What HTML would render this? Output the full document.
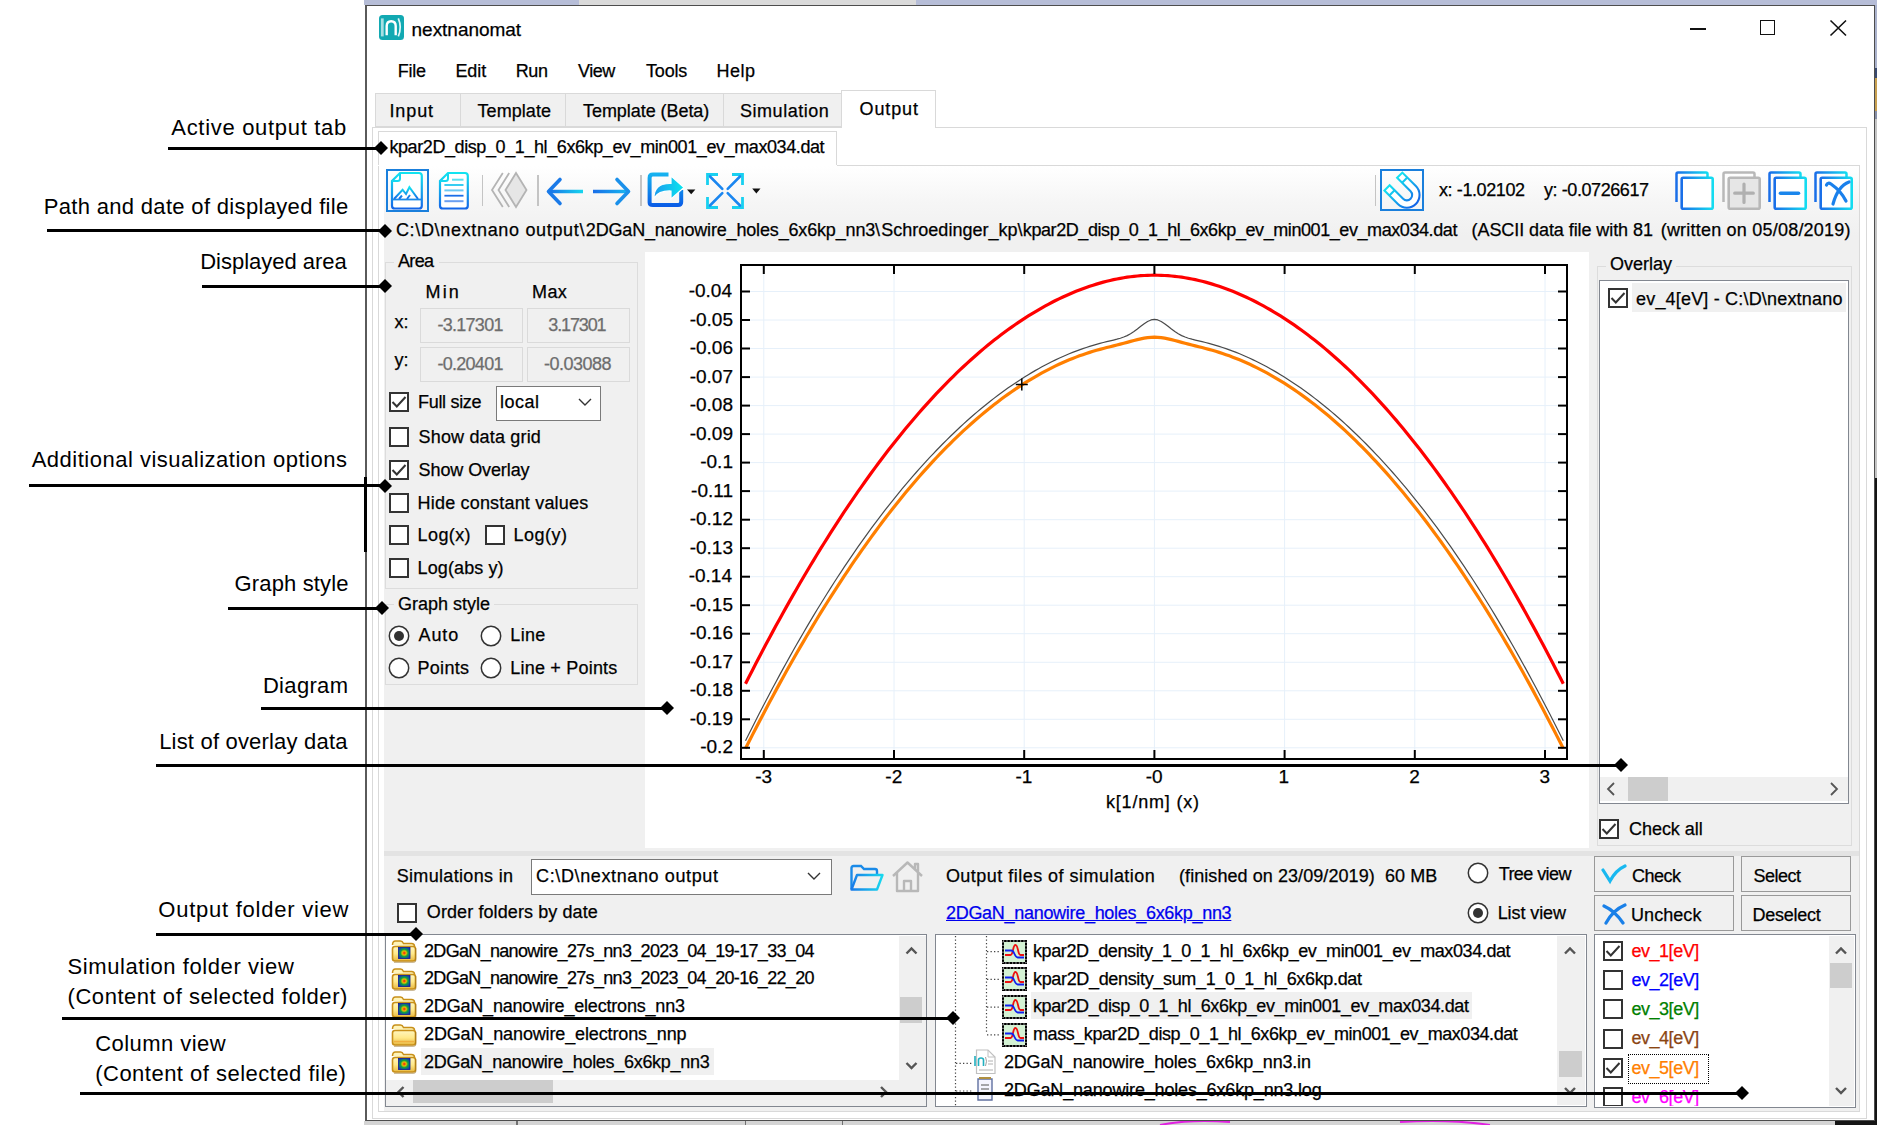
<!DOCTYPE html>
<html><head><meta charset="utf-8"><title>nextnanomat</title>
<style>
html,body{margin:0;padding:0}
body{width:1877px;height:1125px;overflow:hidden;position:relative;background:#fff;font-family:"Liberation Sans",sans-serif}
.t{position:absolute;white-space:pre;font-family:"Liberation Sans",sans-serif;-webkit-text-stroke:0.25px currentColor}
</style></head><body>
<div style="position:absolute;left:364px;top:0px;width:1513px;height:5px;background:#b6bdd7"></div>
<div style="position:absolute;left:579px;top:0px;width:337px;height:5px;background:#dadada"></div>
<div style="position:absolute;left:364px;top:1121px;width:1471px;height:4px;background:#d4d4d4"></div>
<div style="position:absolute;left:1835px;top:1110px;width:42px;height:15px;background:#151515"></div>
<div style="position:absolute;left:1874px;top:5px;width:3px;height:63px;background:#aab2cc"></div>
<div style="position:absolute;left:1874px;top:68px;width:3px;height:10px;background:#3a4a70"></div>
<div style="position:absolute;left:1874px;top:78px;width:3px;height:33px;background:#c8a050"></div>
<div style="position:absolute;left:1874px;top:111px;width:3px;height:8px;background:#8890a8"></div>
<div style="position:absolute;left:1874px;top:119px;width:3px;height:359px;background:#c4c4c4"></div>
<div style="position:absolute;left:1874px;top:478px;width:3px;height:647px;background:#151515"></div>
<div style="position:absolute;left:516px;top:1121px;width:1.5px;height:4px;background:#707070"></div>
<div style="position:absolute;left:744.5px;top:1121px;width:1.5px;height:4px;background:#707070"></div>
<div style="position:absolute;left:841.5px;top:1121px;width:1.5px;height:4px;background:#707070"></div>
<svg style="position:absolute;left:1150px;top:1119px" width="400" height="6" viewBox="0 0 400 6"><path d="M10 6 Q40 0 80 3 M250 3 Q300 0 340 6" fill="none" stroke="#e020e0" stroke-width="2"/></svg>
<div style="position:absolute;left:365px;top:5px;width:1510px;height:1116px;background:#fff;border:1px solid #4d4d4d;border-left:2px solid #5a5a5a;box-sizing:border-box"></div>
<svg style="position:absolute;left:379.3px;top:15.3px" width="25" height="25" viewBox="0 0 25 25">
<rect x="0" y="0" width="25" height="25" rx="3.5" fill="#12a9b2"/>
<rect x="1.9" y="3.4" width="2.8" height="18" fill="#a6dfe2"/>
<path d="M7.7 20.2 V11 Q7.7 6.2 12.2 6.2 Q16.7 6.2 16.7 11 V20.2" fill="none" stroke="#fff" stroke-width="2.4"/>
<path d="M19.3 3.4 Q23.2 12.4 19.3 21.4" fill="none" stroke="#e0f7f8" stroke-width="1.7"/>
</svg>
<div class="t" style="left:411.60px;top:19.92px;font-size:19px;line-height:19px;color:#000;letter-spacing:-0.037px;">nextnanomat</div>
<div style="position:absolute;left:1690px;top:28px;width:16px;height:1.5px;background:#111"></div>
<div style="position:absolute;left:1760px;top:20px;width:15px;height:15px;border:1.5px solid #111;box-sizing:border-box"></div>
<svg style="position:absolute;left:1829px;top:19px" width="19" height="18" viewBox="0 0 19 18"><path d="M1.5 1.5 L17 16.5 M17 1.5 L1.5 16.5" stroke="#111" stroke-width="1.6"/></svg>
<div class="t" style="left:397.80px;top:62.26px;font-size:18px;line-height:18px;color:#000;letter-spacing:-0.298px;">File</div>
<div class="t" style="left:455.40px;top:62.26px;font-size:18px;line-height:18px;color:#000;letter-spacing:-0.072px;">Edit</div>
<div class="t" style="left:515.70px;top:62.26px;font-size:18px;line-height:18px;color:#000;letter-spacing:-0.355px;">Run</div>
<div class="t" style="left:577.90px;top:62.26px;font-size:18px;line-height:18px;color:#000;letter-spacing:-0.430px;">View</div>
<div class="t" style="left:646.00px;top:62.26px;font-size:18px;line-height:18px;color:#000;letter-spacing:-0.180px;">Tools</div>
<div class="t" style="left:716.50px;top:62.26px;font-size:18px;line-height:18px;color:#000;letter-spacing:0.464px;">Help</div>
<div style="position:absolute;left:375px;top:93px;width:86px;height:34px;background:#f0f0f0;border:1px solid #d9d9d9;box-sizing:border-box"></div>
<div class="t" style="left:389.40px;top:102.36px;font-size:18px;line-height:18px;color:#000;letter-spacing:0.917px;">Input</div>
<div style="position:absolute;left:460px;top:93px;width:106px;height:34px;background:#f0f0f0;border:1px solid #d9d9d9;box-sizing:border-box"></div>
<div class="t" style="left:477.50px;top:102.36px;font-size:18px;line-height:18px;color:#000;letter-spacing:0.068px;">Template</div>
<div style="position:absolute;left:565px;top:93px;width:159px;height:34px;background:#f0f0f0;border:1px solid #d9d9d9;box-sizing:border-box"></div>
<div class="t" style="left:583.00px;top:102.36px;font-size:18px;line-height:18px;color:#000;letter-spacing:-0.054px;">Template (Beta)</div>
<div style="position:absolute;left:723px;top:93px;width:119px;height:34px;background:#f0f0f0;border:1px solid #d9d9d9;box-sizing:border-box"></div>
<div class="t" style="left:740.00px;top:102.36px;font-size:18px;line-height:18px;color:#000;letter-spacing:0.530px;">Simulation</div>
<div style="position:absolute;left:372px;top:127px;width:1495px;height:992px;border:1px solid #d9d9d9;box-sizing:border-box;background:#fff"></div>
<div style="position:absolute;left:841px;top:90px;width:95px;height:38px;background:#fff;border:1px solid #d9d9d9;border-bottom:none;box-sizing:border-box"></div>
<div class="t" style="left:859.50px;top:100.06px;font-size:18px;line-height:18px;color:#000;letter-spacing:0.893px;">Output</div>
<div style="position:absolute;left:378px;top:131px;width:459px;height:35px;background:#fff;border:1px solid #d9d9d9;border-bottom:none;box-sizing:border-box"></div>
<div class="t" style="left:389.40px;top:138.26px;font-size:18px;line-height:18px;color:#000;letter-spacing:-0.407px;">kpar2D_disp_0_1_hl_6x6kp_ev_min001_ev_max034.dat</div>
<div style="position:absolute;left:378px;top:165px;width:1482px;height:947px;border:1px solid #d9d9d9;box-sizing:border-box;background:#fff"></div>
<div style="position:absolute;left:378px;top:165px;width:459px;height:1px;background:#fff"></div>
<div style="position:absolute;left:384px;top:166px;width:1475px;height:86px;background:linear-gradient(#ffffff 0px,#f6f6f6 35px,#f0f0f0 70px,#f0f0f0 86px)"></div>
<div style="position:absolute;left:384px;top:252px;width:261px;height:598px;background:#f0f0f0"></div>
<div style="position:absolute;left:645px;top:252px;width:944px;height:596px;background:#fff"></div>
<div style="position:absolute;left:1589px;top:252px;width:270px;height:598px;background:#f0f0f0"></div>
<div style="position:absolute;left:384px;top:848px;width:1475px;height:3px;background:#f0f0f0"></div>
<div style="position:absolute;left:384px;top:851px;width:1475px;height:5px;background:#e3e3e3"></div>
<div style="position:absolute;left:384px;top:856px;width:1475px;height:255px;background:#f0f0f0"></div>
<div style="position:absolute;left:385.5px;top:168.8px;width:43.5px;height:43px;border:2px solid #1a7fdc;box-sizing:border-box"></div>
<svg style="position:absolute;left:0;top:0;overflow:visible" width="1" height="1">
<defs>
<linearGradient id="gv" gradientUnits="objectBoundingBox" x1="0" y1="0" x2="0" y2="1"><stop offset="0" stop-color="#12e4f0"/><stop offset="1" stop-color="#1466e8"/></linearGradient>
<linearGradient id="gh" gradientUnits="objectBoundingBox" x1="0" y1="0" x2="1" y2="0"><stop offset="0" stop-color="#1a6ee8"/><stop offset="1" stop-color="#14dcf0"/></linearGradient>
<linearGradient id="gd" gradientUnits="objectBoundingBox" x1="0" y1="1" x2="1" y2="0"><stop offset="0" stop-color="#1466e8"/><stop offset="1" stop-color="#14e0f0"/></linearGradient>
</defs></svg>
<svg style="position:absolute;left:390px;top:170px" width="34" height="40" viewBox="0 0 34 40">
<path d="M10 3 H29 Q31.8 3 31.8 5.8 V35.7 Q31.8 38.5 29 38.5 H4.8 Q2 38.5 2 35.7 V11 Z" fill="#fff" stroke="url(#gv)" stroke-width="2.2"/>
<path d="M10 3 V8.5 Q10 11 7.5 11 H2" fill="none" stroke="#14d8f0" stroke-width="2"/>
<path d="M4 29 L12.6 19.7 L16 24 L19.4 17.2 L28 29 M9 29 L12 25.5 M17 29 L20 25" fill="none" stroke="url(#gv)" stroke-width="2"/>
<path d="M2.5 29.5 H31.5" stroke="#1a8ae8" stroke-width="1.8"/>
</svg>
<svg style="position:absolute;left:438px;top:170px" width="32" height="40" viewBox="0 0 32 40">
<path d="M10 3 H27 Q29.8 3 29.8 5.8 V35.7 Q29.8 38.5 27 38.5 H4.8 Q2 38.5 2 35.7 V11 Z" fill="#fff" stroke="url(#gv)" stroke-width="2.2"/>
<path d="M10 3 V8.5 Q10 11 7.5 11 H2" fill="none" stroke="#14d8f0" stroke-width="2"/>
<path d="M14 9.7 H25.5" stroke="#5ce0f0" stroke-width="2"/>
<path d="M6.4 15 H25.5" stroke="#22c8f0" stroke-width="1.8"/>
<path d="M6.4 20.4 H25.5" stroke="#6cc8f4" stroke-width="2"/>
<path d="M6.4 25.7 H25.5" stroke="#1a6ee8" stroke-width="1.8"/>
<path d="M6.4 31.2 H25.5" stroke="#6a9ef0" stroke-width="2"/>
</svg>
<div style="position:absolute;left:481.5px;top:175px;width:1.5px;height:31px;background:#c4c4c4"></div>
<svg style="position:absolute;left:490px;top:171px" width="38" height="40" viewBox="0 0 38 40">
<path d="M12.8 2 L2 19 L12.8 36 M19.2 2 L8.5 19 L19.2 36" fill="none" stroke="#b4b4b4" stroke-width="1.8"/>
<path d="M26 2 L36.5 19 L26 36 L15.5 19 Z" fill="#e6e6e6" stroke="#b4b4b4" stroke-width="1.8"/>
<path d="M12.8 2 L19.2 2 M12.8 36 L19.2 36" stroke="#b4b4b4" stroke-width="0"/>
</svg>
<div style="position:absolute;left:537px;top:175px;width:1.5px;height:31px;background:#c4c4c4"></div>
<svg style="position:absolute;left:545px;top:176px" width="40" height="32" viewBox="0 0 40 32">
<defs><linearGradient id="ga" gradientUnits="userSpaceOnUse" x1="3" y1="0" x2="38" y2="0"><stop offset="0" stop-color="#1a6ee8"/><stop offset="1" stop-color="#16d6ee"/></linearGradient>
<linearGradient id="gb" gradientUnits="userSpaceOnUse" x1="2" y1="0" x2="37" y2="0"><stop offset="0" stop-color="#1a6ee8"/><stop offset="1" stop-color="#16b8f0"/></linearGradient></defs>
<path d="M4 15.5 H38" stroke="url(#ga)" stroke-width="3.4"/>
<path d="M15 3.5 L3.5 15.5 L15 27.5" fill="none" stroke="#1a7ae8" stroke-width="3.6" stroke-linecap="round" stroke-linejoin="round"/>
</svg>
<svg style="position:absolute;left:591px;top:176px" width="42" height="32" viewBox="0 0 42 32">
<path d="M2 15.5 H37" stroke="url(#gb)" stroke-width="3.4"/>
<path d="M26 3.5 L37.5 15.5 L26 27.5" fill="none" stroke="#1a90ea" stroke-width="3.6" stroke-linecap="round" stroke-linejoin="round"/>
</svg>
<div style="position:absolute;left:640px;top:175px;width:1.5px;height:31px;background:#c4c4c4"></div>
<svg style="position:absolute;left:646px;top:171px" width="54" height="38" viewBox="0 0 54 38">
<defs><linearGradient id="gex" gradientUnits="userSpaceOnUse" x1="0" y1="2" x2="0" y2="36"><stop offset="0" stop-color="#16b4f0"/><stop offset="1" stop-color="#0a5ae6"/></linearGradient>
<linearGradient id="garr" gradientUnits="userSpaceOnUse" x1="10" y1="0" x2="38" y2="0"><stop offset="0" stop-color="#1aa0ee"/><stop offset="1" stop-color="#0ae6ee"/></linearGradient></defs>
<path d="M22.5 3.6 H7 Q3.6 3.6 3.6 7 V31.5 Q3.6 34 7 34 H32 Q35.2 34 35.2 31 V19" fill="none" stroke="url(#gex)" stroke-width="4"/>
<path d="M8 27 Q8 12 25 12.5 V5 L38 16.5 L25 28 V20 Q13 19.5 8 27 Z" fill="url(#garr)" stroke="#fff" stroke-width="1.2"/>
<path d="M41 18.5 H49.4 L45.2 23.3 Z" fill="#111"/>
</svg>
<svg style="position:absolute;left:705px;top:171px" width="58" height="40" viewBox="0 0 58 40">
<path d="M2.5 14 V3.5 H13 M2.5 26 V36.5 H13 M37.5 14 V3.5 H27 M37.5 26 V36.5 H27" fill="none" stroke="#18d0f0" stroke-width="2.8"/>
<path d="M5 5.5 L17.3 17.8 M35 5.5 L22.7 17.8 M5 34.5 L17.3 22.2 M35 34.5 L22.7 22.2" fill="none" stroke="#1a86f0" stroke-width="2.6" stroke-linecap="round"/>
<path d="M47.2 17.5 H55.5 L51.35 22.4 Z" fill="#111"/>
</svg>
<div style="position:absolute;left:1374.5px;top:175px;width:1.5px;height:31px;background:#c4c4c4"></div>
<div style="position:absolute;left:1380.4px;top:168.8px;width:43.2px;height:42.7px;border:2px solid #1a7fdc;box-sizing:border-box"></div>
<svg style="position:absolute;left:1383px;top:171px" width="40" height="40" viewBox="0 0 40 40">
<defs><linearGradient id="gmag" gradientUnits="userSpaceOnUse" x1="0" y1="-15" x2="0" y2="15"><stop offset="0" stop-color="#14e0f0"/><stop offset="1" stop-color="#1466e8"/></linearGradient></defs>
<g transform="translate(21.6 21.8) rotate(-45) scale(1.04)">
<path d="M-12.2 -15.25 V3.05 A12.2 12.2 0 0 0 12.2 3.05 V-15.25 H5.1 V3.05 A5.1 5.1 0 0 1 -5.1 3.05 V-15.25 Z" fill="#fff" stroke="url(#gmag)" stroke-width="2"/>
<path d="M-12.2 -8.5 H-5.1 M5.1 -8.5 H12.2" stroke="#14c8f0" stroke-width="2"/>
</g></svg>
<div class="t" style="left:1439.00px;top:180.76px;font-size:18px;line-height:18px;color:#000;letter-spacing:-0.405px;">x: -1.02102</div>
<div class="t" style="left:1544.00px;top:180.76px;font-size:18px;line-height:18px;color:#000;letter-spacing:-0.423px;">y: -0.0726617</div>
<svg style="position:absolute;left:1674.9px;top:171px" width="40" height="40" viewBox="0 0 40 40">
<path d="M1.5 31 V3 Q1.5 1.5 3 1.5 H31 Q32.5 1.5 32.5 3 V6.5" fill="none" stroke="url(#gh)" stroke-width="2.5"/>
<rect x="6.7" y="6.7" width="31" height="31" rx="1.5" fill="#fff" stroke="url(#gh)" stroke-width="2.6"/>

</svg>
<svg style="position:absolute;left:1721.7px;top:171px" width="40" height="40" viewBox="0 0 40 40">
<path d="M1.5 31 V3 Q1.5 1.5 3 1.5 H31 Q32.5 1.5 32.5 3 V6.5" fill="none" stroke="#b8b8b8" stroke-width="2.5"/>
<rect x="6.7" y="6.7" width="31" height="31" rx="1.5" fill="#e6e6e6" stroke="#b8b8b8" stroke-width="2.6"/>
<path d="M22 13 V31.5 M12.7 22.2 H31.3" stroke="#b0b0b0" stroke-width="3.2" stroke-linecap="round"/>
</svg>
<svg style="position:absolute;left:1767.9px;top:171px" width="40" height="40" viewBox="0 0 40 40">
<path d="M1.5 31 V3 Q1.5 1.5 3 1.5 H31 Q32.5 1.5 32.5 3 V6.5" fill="none" stroke="url(#gh)" stroke-width="2.5"/>
<rect x="6.7" y="6.7" width="31" height="31" rx="1.5" fill="#fff" stroke="url(#gh)" stroke-width="2.6"/>
<path d="M12.5 22.3 H30.5" stroke="#1a86ec" stroke-width="3.6" stroke-linecap="round"/>
</svg>
<svg style="position:absolute;left:1814.1px;top:171px" width="40" height="40" viewBox="0 0 40 40">
<path d="M1.5 31 V3 Q1.5 1.5 3 1.5 H31 Q32.5 1.5 32.5 3 V6.5" fill="none" stroke="url(#gh)" stroke-width="2.5"/>
<rect x="6.7" y="6.7" width="31" height="31" rx="1.5" fill="#fff" stroke="url(#gh)" stroke-width="2.6"/>
<path d="M35 11 Q24 15 19 33 M12.5 14 Q14 11 17 13 Q27 20 32 30" fill="none" stroke="#1a80ec" stroke-width="3.2" stroke-linecap="round"/>
</svg>
<div class="t" style="left:395.90px;top:220.76px;font-size:18px;line-height:18px;color:#000;letter-spacing:0.674px;">C:\D\nextnano output\</div>
<div class="t" style="left:585.80px;top:220.76px;font-size:18px;line-height:18px;color:#000;letter-spacing:-0.164px;">2DGaN_nanowire_holes_6x6kp_nn3\</div>
<div class="t" style="left:881.30px;top:220.76px;font-size:18px;line-height:18px;color:#000;letter-spacing:0.007px;">Schroedinger_kp\</div>
<div class="t" style="left:1022.80px;top:220.76px;font-size:18px;line-height:18px;color:#000;letter-spacing:-0.420px;">kpar2D_disp_0_1_hl_6x6kp_ev_min001_ev_max034.dat</div>
<div class="t" style="left:1471.60px;top:220.76px;font-size:18px;line-height:18px;color:#000;letter-spacing:-0.077px;">(ASCII data file with 81</div>
<div class="t" style="left:1660.70px;top:220.76px;font-size:18px;line-height:18px;color:#000;letter-spacing:0.213px;">(written on 05/08/2019)</div>
<div style="position:absolute;left:385px;top:262px;width:253px;height:327px;border:1px solid #dcdcdc;box-sizing:border-box"></div>
<div style="position:absolute;left:394px;top:260px;width:45px;height:4px;background:#f0f0f0"></div>
<div class="t" style="left:398.00px;top:251.76px;font-size:18px;line-height:18px;color:#000;letter-spacing:-0.670px;">Area</div>
<div class="t" style="left:425.60px;top:282.76px;font-size:18px;line-height:18px;color:#000;letter-spacing:2.103px;">Min</div>
<div class="t" style="left:532.00px;top:282.76px;font-size:18px;line-height:18px;color:#000;letter-spacing:0.398px;">Max</div>
<div class="t" style="left:394.50px;top:312.56px;font-size:18px;line-height:18px;color:#000;">x:</div>
<div class="t" style="left:394.50px;top:350.56px;font-size:18px;line-height:18px;color:#000;">y:</div>
<div style="position:absolute;left:420px;top:308px;width:103px;height:35px;border:1px solid #dadada;box-sizing:border-box;background:#f0f0f0"></div>
<div class="t" style="left:437.60px;top:315.76px;font-size:18px;line-height:18px;color:#6d6d6d;letter-spacing:-0.750px;">-3.17301</div>
<div style="position:absolute;left:527px;top:308px;width:103px;height:35px;border:1px solid #dadada;box-sizing:border-box;background:#f0f0f0"></div>
<div class="t" style="left:548.25px;top:315.76px;font-size:18px;line-height:18px;color:#6d6d6d;letter-spacing:-1.126px;">3.17301</div>
<div style="position:absolute;left:420px;top:347px;width:103px;height:35px;border:1px solid #dadada;box-sizing:border-box;background:#f0f0f0"></div>
<div class="t" style="left:437.60px;top:354.76px;font-size:18px;line-height:18px;color:#6d6d6d;letter-spacing:-0.750px;">-0.20401</div>
<div style="position:absolute;left:527px;top:347px;width:103px;height:35px;border:1px solid #dadada;box-sizing:border-box;background:#f0f0f0"></div>
<div class="t" style="left:544.00px;top:354.76px;font-size:18px;line-height:18px;color:#6d6d6d;letter-spacing:-0.493px;">-0.03088</div>
<div style="position:absolute;left:389px;top:392px;width:20px;height:20px;border:2px solid #333;box-sizing:border-box;background:#fff"></div>
<svg style="position:absolute;left:389px;top:392px" width="20" height="20" viewBox="0 0 20 20"><path d="M3.5 10 L7.8 14.5 L16.5 5" fill="none" stroke="#333" stroke-width="2"/></svg>
<div class="t" style="left:418.00px;top:392.76px;font-size:18px;line-height:18px;color:#000;letter-spacing:-0.313px;">Full size</div>
<div style="position:absolute;left:496px;top:386px;width:105px;height:35px;border:1.5px solid #7a7a7a;box-sizing:border-box;background:#fff"></div>
<div class="t" style="left:499.90px;top:392.76px;font-size:18px;line-height:18px;color:#000;letter-spacing:0.495px;">local</div>
<svg style="position:absolute;left:577px;top:396px" width="16" height="12" viewBox="0 0 16 12"><path d="M2 3 L8 9 L14 3" fill="none" stroke="#333" stroke-width="1.4"/></svg>
<div style="position:absolute;left:389px;top:427px;width:20px;height:20px;border:2px solid #333;box-sizing:border-box;background:#fff"></div>
<div class="t" style="left:418.60px;top:428.26px;font-size:18px;line-height:18px;color:#000;letter-spacing:0.164px;">Show data grid</div>
<div style="position:absolute;left:389px;top:460px;width:20px;height:20px;border:2px solid #333;box-sizing:border-box;background:#fff"></div>
<svg style="position:absolute;left:389px;top:460px" width="20" height="20" viewBox="0 0 20 20"><path d="M3.5 10 L7.8 14.5 L16.5 5" fill="none" stroke="#333" stroke-width="2"/></svg>
<div class="t" style="left:418.60px;top:461.26px;font-size:18px;line-height:18px;color:#000;letter-spacing:-0.095px;">Show Overlay</div>
<div style="position:absolute;left:389px;top:493px;width:20px;height:20px;border:2px solid #333;box-sizing:border-box;background:#fff"></div>
<div class="t" style="left:417.60px;top:494.26px;font-size:18px;line-height:18px;color:#000;letter-spacing:0.184px;">Hide constant values</div>
<div style="position:absolute;left:389px;top:525px;width:20px;height:20px;border:2px solid #333;box-sizing:border-box;background:#fff"></div>
<div class="t" style="left:417.60px;top:526.26px;font-size:18px;line-height:18px;color:#000;letter-spacing:0.395px;">Log(x)</div>
<div style="position:absolute;left:389px;top:558px;width:20px;height:20px;border:2px solid #333;box-sizing:border-box;background:#fff"></div>
<div class="t" style="left:417.60px;top:559.26px;font-size:18px;line-height:18px;color:#000;letter-spacing:0.106px;">Log(abs y)</div>
<div style="position:absolute;left:485px;top:525px;width:20px;height:20px;border:2px solid #333;box-sizing:border-box;background:#fff"></div>
<div class="t" style="left:513.40px;top:526.26px;font-size:18px;line-height:18px;color:#000;letter-spacing:0.515px;">Log(y)</div>
<div style="position:absolute;left:385px;top:604px;width:253px;height:81px;border:1px solid #dcdcdc;box-sizing:border-box"></div>
<div style="position:absolute;left:394px;top:602px;width:100px;height:4px;background:#f0f0f0"></div>
<div class="t" style="left:398.00px;top:594.76px;font-size:18px;line-height:18px;color:#000;letter-spacing:-0.003px;">Graph style</div>
<svg style="position:absolute;left:387.6px;top:624.5px" width="22" height="22" viewBox="0 0 22 22"><circle cx="11" cy="11" r="9.7" fill="#fff" stroke="#333" stroke-width="1.5"/><circle cx="11" cy="11" r="5" fill="#333"/></svg>
<div class="t" style="left:418.50px;top:626.46px;font-size:18px;line-height:18px;color:#000;letter-spacing:0.927px;">Auto</div>
<svg style="position:absolute;left:480.4px;top:624.5px" width="22" height="22" viewBox="0 0 22 22"><circle cx="11" cy="11" r="9.7" fill="#fff" stroke="#333" stroke-width="1.5"/></svg>
<div class="t" style="left:510.30px;top:626.46px;font-size:18px;line-height:18px;color:#000;letter-spacing:0.326px;">Line</div>
<svg style="position:absolute;left:387.6px;top:656.8px" width="22" height="22" viewBox="0 0 22 22"><circle cx="11" cy="11" r="9.7" fill="#fff" stroke="#333" stroke-width="1.5"/></svg>
<div class="t" style="left:417.50px;top:659.06px;font-size:18px;line-height:18px;color:#000;letter-spacing:0.295px;">Points</div>
<svg style="position:absolute;left:480.4px;top:656.8px" width="22" height="22" viewBox="0 0 22 22"><circle cx="11" cy="11" r="9.7" fill="#fff" stroke="#333" stroke-width="1.5"/></svg>
<div class="t" style="left:510.30px;top:659.06px;font-size:18px;line-height:18px;color:#000;letter-spacing:0.202px;">Line + Points</div>
<svg style="position:absolute;left:0;top:0" width="1877" height="1125">
<line x1="763.8" y1="265" x2="763.8" y2="759" stroke="#e6f0fa" stroke-width="1"/>
<line x1="894.0" y1="265" x2="894.0" y2="759" stroke="#e6f0fa" stroke-width="1"/>
<line x1="1024.2" y1="265" x2="1024.2" y2="759" stroke="#e6f0fa" stroke-width="1"/>
<line x1="1154.4" y1="265" x2="1154.4" y2="759" stroke="#e6f0fa" stroke-width="1"/>
<line x1="1284.6" y1="265" x2="1284.6" y2="759" stroke="#e6f0fa" stroke-width="1"/>
<line x1="1414.8" y1="265" x2="1414.8" y2="759" stroke="#e6f0fa" stroke-width="1"/>
<line x1="1545.0" y1="265" x2="1545.0" y2="759" stroke="#e6f0fa" stroke-width="1"/>
<line x1="741" y1="291.5" x2="1567" y2="291.5" stroke="#e6f0fa" stroke-width="1"/>
<line x1="741" y1="320.0" x2="1567" y2="320.0" stroke="#e6f0fa" stroke-width="1"/>
<line x1="741" y1="348.5" x2="1567" y2="348.5" stroke="#e6f0fa" stroke-width="1"/>
<line x1="741" y1="377.1" x2="1567" y2="377.1" stroke="#e6f0fa" stroke-width="1"/>
<line x1="741" y1="405.6" x2="1567" y2="405.6" stroke="#e6f0fa" stroke-width="1"/>
<line x1="741" y1="434.1" x2="1567" y2="434.1" stroke="#e6f0fa" stroke-width="1"/>
<line x1="741" y1="462.6" x2="1567" y2="462.6" stroke="#e6f0fa" stroke-width="1"/>
<line x1="741" y1="491.1" x2="1567" y2="491.1" stroke="#e6f0fa" stroke-width="1"/>
<line x1="741" y1="519.7" x2="1567" y2="519.7" stroke="#e6f0fa" stroke-width="1"/>
<line x1="741" y1="548.2" x2="1567" y2="548.2" stroke="#e6f0fa" stroke-width="1"/>
<line x1="741" y1="576.7" x2="1567" y2="576.7" stroke="#e6f0fa" stroke-width="1"/>
<line x1="741" y1="605.2" x2="1567" y2="605.2" stroke="#e6f0fa" stroke-width="1"/>
<line x1="741" y1="633.7" x2="1567" y2="633.7" stroke="#e6f0fa" stroke-width="1"/>
<line x1="741" y1="662.3" x2="1567" y2="662.3" stroke="#e6f0fa" stroke-width="1"/>
<line x1="741" y1="690.8" x2="1567" y2="690.8" stroke="#e6f0fa" stroke-width="1"/>
<line x1="741" y1="719.3" x2="1567" y2="719.3" stroke="#e6f0fa" stroke-width="1"/>
<line x1="741" y1="747.8" x2="1567" y2="747.8" stroke="#e6f0fa" stroke-width="1"/>
<polyline points="745.51,740.74 748.91,733.92 752.32,727.16 755.73,720.45 759.14,713.80 762.54,707.21 765.95,700.68 769.36,694.20 772.77,687.79 776.17,681.43 779.58,675.13 782.99,668.89 786.40,662.71 789.80,656.59 793.21,650.53 796.62,644.53 800.03,638.59 803.43,632.71 806.84,626.89 810.25,621.13 813.66,615.43 817.06,609.80 820.47,604.22 823.88,598.71 827.29,593.26 830.69,587.87 834.10,582.54 837.51,577.28 840.92,572.07 844.32,566.93 847.73,561.85 851.14,556.82 854.55,551.86 857.95,546.96 861.36,542.12 864.77,537.35 868.17,532.63 871.58,527.97 874.99,523.37 878.40,518.83 881.80,514.35 885.21,509.93 888.62,505.57 892.03,501.26 895.43,497.02 898.84,492.83 902.25,488.70 905.66,484.62 909.06,480.61 912.47,476.64 915.88,472.74 919.29,468.89 922.69,465.10 926.10,461.36 929.51,457.68 932.92,454.06 936.32,450.49 939.73,446.97 943.14,443.51 946.55,440.11 949.95,436.75 953.36,433.46 956.77,430.21 960.18,427.03 963.58,423.89 966.99,420.81 970.40,417.79 973.81,414.82 977.21,411.90 980.62,409.03 984.03,406.23 987.44,403.47 990.84,400.77 994.25,398.12 997.66,395.53 1001.07,393.00 1004.47,390.51 1007.88,388.08 1011.29,385.71 1014.69,383.39 1018.10,381.13 1021.51,378.92 1024.92,376.76 1028.32,374.67 1031.73,372.62 1035.14,370.63 1038.55,368.70 1041.95,366.82 1045.36,365.00 1048.77,363.23 1052.18,361.52 1055.58,359.86 1058.99,358.26 1062.40,356.71 1065.81,355.23 1069.21,353.79 1072.62,352.41 1076.03,351.09 1079.44,349.83 1082.84,348.62 1086.25,347.46 1089.66,346.37 1093.07,345.32 1096.47,344.34 1099.88,343.40 1103.29,342.52 1106.70,341.68 1110.10,340.86 1113.51,340.05 1116.92,339.18 1120.33,338.22 1123.73,337.05 1127.14,335.61 1130.55,333.80 1133.96,331.60 1137.36,329.05 1140.77,326.33 1144.18,323.68 1147.59,321.44 1150.99,319.93 1154.40,319.40 1157.81,319.93 1161.21,321.44 1164.62,323.68 1168.03,326.33 1171.44,329.05 1174.84,331.60 1178.25,333.80 1181.66,335.61 1185.07,337.05 1188.47,338.22 1191.88,339.18 1195.29,340.05 1198.70,340.86 1202.10,341.68 1205.51,342.52 1208.92,343.40 1212.33,344.34 1215.73,345.32 1219.14,346.37 1222.55,347.46 1225.96,348.62 1229.36,349.83 1232.77,351.09 1236.18,352.41 1239.59,353.79 1242.99,355.23 1246.40,356.71 1249.81,358.26 1253.22,359.86 1256.62,361.52 1260.03,363.23 1263.44,365.00 1266.85,366.82 1270.25,368.70 1273.66,370.63 1277.07,372.62 1280.48,374.67 1283.88,376.76 1287.29,378.92 1290.70,381.13 1294.11,383.39 1297.51,385.71 1300.92,388.08 1304.33,390.51 1307.73,393.00 1311.14,395.53 1314.55,398.12 1317.96,400.77 1321.36,403.47 1324.77,406.23 1328.18,409.03 1331.59,411.90 1334.99,414.82 1338.40,417.79 1341.81,420.81 1345.22,423.89 1348.62,427.03 1352.03,430.21 1355.44,433.46 1358.85,436.75 1362.25,440.11 1365.66,443.51 1369.07,446.97 1372.48,450.49 1375.88,454.06 1379.29,457.68 1382.70,461.36 1386.11,465.10 1389.51,468.89 1392.92,472.74 1396.33,476.64 1399.74,480.61 1403.14,484.62 1406.55,488.70 1409.96,492.83 1413.37,497.02 1416.77,501.26 1420.18,505.57 1423.59,509.93 1427.00,514.35 1430.40,518.83 1433.81,523.37 1437.22,527.97 1440.63,532.63 1444.03,537.35 1447.44,542.12 1450.85,546.96 1454.25,551.86 1457.66,556.82 1461.07,561.85 1464.48,566.93 1467.88,572.07 1471.29,577.28 1474.70,582.54 1478.11,587.87 1481.51,593.26 1484.92,598.71 1488.33,604.22 1491.74,609.80 1495.14,615.43 1498.55,621.13 1501.96,626.89 1505.37,632.71 1508.77,638.59 1512.18,644.53 1515.59,650.53 1519.00,656.59 1522.40,662.71 1525.81,668.89 1529.22,675.13 1532.63,681.43 1536.03,687.79 1539.44,694.20 1542.85,700.68 1546.26,707.21 1549.66,713.80 1553.07,720.45 1556.48,727.16 1559.89,733.92 1563.29,740.74" fill="none" stroke="#4a4a4a" stroke-width="1.2" stroke-linejoin="round"/>
<polyline points="745.51,748.54 748.91,741.80 752.32,735.11 755.73,728.48 759.14,721.91 762.54,715.39 765.95,708.93 769.36,702.52 772.77,696.17 776.17,689.88 779.58,683.64 782.99,677.46 786.40,671.34 789.80,665.27 793.21,659.26 796.62,653.31 800.03,647.41 803.43,641.57 806.84,635.78 810.25,630.06 813.66,624.38 817.06,618.77 820.47,613.21 823.88,607.71 827.29,602.26 830.69,596.87 834.10,591.54 837.51,586.26 840.92,581.04 844.32,575.88 847.73,570.77 851.14,565.72 854.55,560.72 857.95,555.79 861.36,550.90 864.77,546.08 868.17,541.31 871.58,536.60 874.99,531.94 878.40,527.34 881.80,522.80 885.21,518.31 888.62,513.88 892.03,509.51 895.43,505.19 898.84,500.93 902.25,496.72 905.66,492.58 909.06,488.48 912.47,484.45 915.88,480.47 919.29,476.55 922.69,472.68 926.10,468.87 929.51,465.12 932.92,461.42 936.32,457.78 939.73,454.20 943.14,450.67 946.55,447.20 949.95,443.79 953.36,440.43 956.77,437.13 960.18,433.88 963.58,430.69 966.99,427.56 970.40,424.48 973.81,421.47 977.21,418.50 980.62,415.60 984.03,412.75 987.44,409.95 990.84,407.22 994.25,404.53 997.66,401.91 1001.07,399.34 1004.47,396.83 1007.88,394.38 1011.29,391.98 1014.69,389.64 1018.10,387.35 1021.51,385.12 1024.92,382.95 1028.32,380.83 1031.73,378.77 1035.14,376.77 1038.55,374.82 1041.95,372.93 1045.36,371.10 1048.77,369.32 1052.18,367.60 1055.58,365.93 1058.99,364.32 1062.40,362.77 1065.81,361.28 1069.21,359.84 1072.62,358.45 1076.03,357.13 1079.44,355.86 1082.84,354.64 1086.25,353.48 1089.66,352.38 1093.07,351.32 1096.47,350.32 1099.88,349.36 1103.29,348.44 1106.70,347.56 1110.10,346.69 1113.51,345.84 1116.92,344.98 1120.33,344.12 1123.73,343.24 1127.14,342.33 1130.55,341.42 1133.96,340.52 1137.36,339.65 1140.77,338.85 1144.18,338.17 1147.59,337.64 1150.99,337.31 1154.40,337.20 1157.81,337.31 1161.21,337.64 1164.62,338.17 1168.03,338.85 1171.44,339.65 1174.84,340.52 1178.25,341.42 1181.66,342.33 1185.07,343.24 1188.47,344.12 1191.88,344.98 1195.29,345.84 1198.70,346.69 1202.10,347.56 1205.51,348.44 1208.92,349.36 1212.33,350.32 1215.73,351.32 1219.14,352.38 1222.55,353.48 1225.96,354.64 1229.36,355.86 1232.77,357.13 1236.18,358.45 1239.59,359.84 1242.99,361.28 1246.40,362.77 1249.81,364.32 1253.22,365.93 1256.62,367.60 1260.03,369.32 1263.44,371.10 1266.85,372.93 1270.25,374.82 1273.66,376.77 1277.07,378.77 1280.48,380.83 1283.88,382.95 1287.29,385.12 1290.70,387.35 1294.11,389.64 1297.51,391.98 1300.92,394.38 1304.33,396.83 1307.73,399.34 1311.14,401.91 1314.55,404.53 1317.96,407.22 1321.36,409.95 1324.77,412.75 1328.18,415.60 1331.59,418.50 1334.99,421.47 1338.40,424.48 1341.81,427.56 1345.22,430.69 1348.62,433.88 1352.03,437.13 1355.44,440.43 1358.85,443.79 1362.25,447.20 1365.66,450.67 1369.07,454.20 1372.48,457.78 1375.88,461.42 1379.29,465.12 1382.70,468.87 1386.11,472.68 1389.51,476.55 1392.92,480.47 1396.33,484.45 1399.74,488.48 1403.14,492.58 1406.55,496.72 1409.96,500.93 1413.37,505.19 1416.77,509.51 1420.18,513.88 1423.59,518.31 1427.00,522.80 1430.40,527.34 1433.81,531.94 1437.22,536.60 1440.63,541.31 1444.03,546.08 1447.44,550.90 1450.85,555.79 1454.25,560.72 1457.66,565.72 1461.07,570.77 1464.48,575.88 1467.88,581.04 1471.29,586.26 1474.70,591.54 1478.11,596.87 1481.51,602.26 1484.92,607.71 1488.33,613.21 1491.74,618.77 1495.14,624.38 1498.55,630.06 1501.96,635.78 1505.37,641.57 1508.77,647.41 1512.18,653.31 1515.59,659.26 1519.00,665.27 1522.40,671.34 1525.81,677.46 1529.22,683.64 1532.63,689.88 1536.03,696.17 1539.44,702.52 1542.85,708.93 1546.26,715.39 1549.66,721.91 1553.07,728.48 1556.48,735.11 1559.89,741.80 1563.29,748.54" fill="none" stroke="#ff7f00" stroke-width="3.2" stroke-linejoin="round"/>
<polyline points="745.51,683.80 748.91,677.08 752.32,670.42 755.73,663.81 759.14,657.27 762.54,650.77 765.95,644.34 769.36,637.96 772.77,631.63 776.17,625.36 779.58,619.15 782.99,612.99 786.40,606.89 789.80,600.85 793.21,594.86 796.62,588.93 800.03,583.05 803.43,577.23 806.84,571.46 810.25,565.75 813.66,560.10 817.06,554.50 820.47,548.96 823.88,543.47 827.29,538.04 830.69,532.67 834.10,527.35 837.51,522.09 840.92,516.88 844.32,511.73 847.73,506.64 851.14,501.60 854.55,496.61 857.95,491.69 861.36,486.81 864.77,482.00 868.17,477.24 871.58,472.53 874.99,467.88 878.40,463.29 881.80,458.75 885.21,454.27 888.62,449.84 892.03,445.47 895.43,441.16 898.84,436.90 902.25,432.69 905.66,428.55 909.06,424.45 912.47,420.41 915.88,416.43 919.29,412.51 922.69,408.63 926.10,404.82 929.51,401.06 932.92,397.35 936.32,393.70 939.73,390.11 943.14,386.57 946.55,383.08 949.95,379.65 953.36,376.28 956.77,372.96 960.18,369.70 963.58,366.49 966.99,363.34 970.40,360.24 973.81,357.19 977.21,354.20 980.62,351.27 984.03,348.39 987.44,345.57 990.84,342.80 994.25,340.08 997.66,337.42 1001.07,334.82 1004.47,332.27 1007.88,329.77 1011.29,327.33 1014.69,324.94 1018.10,322.61 1021.51,320.33 1024.92,318.11 1028.32,315.94 1031.73,313.82 1035.14,311.76 1038.55,309.76 1041.95,307.81 1045.36,305.91 1048.77,304.07 1052.18,302.28 1055.58,300.55 1058.99,298.87 1062.40,297.25 1065.81,295.68 1069.21,294.17 1072.62,292.72 1076.03,291.32 1079.44,289.97 1082.84,288.69 1086.25,287.45 1089.66,286.28 1093.07,285.16 1096.47,284.10 1099.88,283.10 1103.29,282.15 1106.70,281.27 1110.10,280.44 1113.51,279.67 1116.92,278.96 1120.33,278.31 1123.73,277.72 1127.14,277.20 1130.55,276.73 1133.96,276.33 1137.36,275.98 1140.77,275.70 1144.18,275.48 1147.59,275.33 1150.99,275.23 1154.40,275.20 1157.81,275.23 1161.21,275.33 1164.62,275.48 1168.03,275.70 1171.44,275.98 1174.84,276.33 1178.25,276.73 1181.66,277.20 1185.07,277.72 1188.47,278.31 1191.88,278.96 1195.29,279.67 1198.70,280.44 1202.10,281.27 1205.51,282.15 1208.92,283.10 1212.33,284.10 1215.73,285.16 1219.14,286.28 1222.55,287.45 1225.96,288.69 1229.36,289.97 1232.77,291.32 1236.18,292.72 1239.59,294.17 1242.99,295.68 1246.40,297.25 1249.81,298.87 1253.22,300.55 1256.62,302.28 1260.03,304.07 1263.44,305.91 1266.85,307.81 1270.25,309.76 1273.66,311.76 1277.07,313.82 1280.48,315.94 1283.88,318.11 1287.29,320.33 1290.70,322.61 1294.11,324.94 1297.51,327.33 1300.92,329.77 1304.33,332.27 1307.73,334.82 1311.14,337.42 1314.55,340.08 1317.96,342.80 1321.36,345.57 1324.77,348.39 1328.18,351.27 1331.59,354.20 1334.99,357.19 1338.40,360.24 1341.81,363.34 1345.22,366.49 1348.62,369.70 1352.03,372.96 1355.44,376.28 1358.85,379.65 1362.25,383.08 1365.66,386.57 1369.07,390.11 1372.48,393.70 1375.88,397.35 1379.29,401.06 1382.70,404.82 1386.11,408.63 1389.51,412.51 1392.92,416.43 1396.33,420.41 1399.74,424.45 1403.14,428.55 1406.55,432.69 1409.96,436.90 1413.37,441.16 1416.77,445.47 1420.18,449.84 1423.59,454.27 1427.00,458.75 1430.40,463.29 1433.81,467.88 1437.22,472.53 1440.63,477.24 1444.03,482.00 1447.44,486.81 1450.85,491.69 1454.25,496.61 1457.66,501.60 1461.07,506.64 1464.48,511.73 1467.88,516.88 1471.29,522.09 1474.70,527.35 1478.11,532.67 1481.51,538.04 1484.92,543.47 1488.33,548.96 1491.74,554.50 1495.14,560.10 1498.55,565.75 1501.96,571.46 1505.37,577.23 1508.77,583.05 1512.18,588.93 1515.59,594.86 1519.00,600.85 1522.40,606.89 1525.81,612.99 1529.22,619.15 1532.63,625.36 1536.03,631.63 1539.44,637.96 1542.85,644.34 1546.26,650.77 1549.66,657.27 1553.07,663.81 1556.48,670.42 1559.89,677.08 1563.29,683.80" fill="none" stroke="#ff0000" stroke-width="3.2" stroke-linejoin="round"/>
<rect x="741" y="265" width="826" height="494" fill="none" stroke="#000" stroke-width="2"/>
<line x1="763.8" y1="265" x2="763.8" y2="274" stroke="#000" stroke-width="2"/>
<line x1="763.8" y1="750" x2="763.8" y2="759" stroke="#000" stroke-width="2"/>
<line x1="894.0" y1="265" x2="894.0" y2="274" stroke="#000" stroke-width="2"/>
<line x1="894.0" y1="750" x2="894.0" y2="759" stroke="#000" stroke-width="2"/>
<line x1="1024.2" y1="265" x2="1024.2" y2="274" stroke="#000" stroke-width="2"/>
<line x1="1024.2" y1="750" x2="1024.2" y2="759" stroke="#000" stroke-width="2"/>
<line x1="1154.4" y1="265" x2="1154.4" y2="274" stroke="#000" stroke-width="2"/>
<line x1="1154.4" y1="750" x2="1154.4" y2="759" stroke="#000" stroke-width="2"/>
<line x1="1284.6" y1="265" x2="1284.6" y2="274" stroke="#000" stroke-width="2"/>
<line x1="1284.6" y1="750" x2="1284.6" y2="759" stroke="#000" stroke-width="2"/>
<line x1="1414.8" y1="265" x2="1414.8" y2="274" stroke="#000" stroke-width="2"/>
<line x1="1414.8" y1="750" x2="1414.8" y2="759" stroke="#000" stroke-width="2"/>
<line x1="1545.0" y1="265" x2="1545.0" y2="274" stroke="#000" stroke-width="2"/>
<line x1="1545.0" y1="750" x2="1545.0" y2="759" stroke="#000" stroke-width="2"/>
<line x1="741" y1="291.5" x2="750" y2="291.5" stroke="#000" stroke-width="2"/>
<line x1="1558" y1="291.5" x2="1567" y2="291.5" stroke="#000" stroke-width="2"/>
<line x1="741" y1="320.0" x2="750" y2="320.0" stroke="#000" stroke-width="2"/>
<line x1="1558" y1="320.0" x2="1567" y2="320.0" stroke="#000" stroke-width="2"/>
<line x1="741" y1="348.5" x2="750" y2="348.5" stroke="#000" stroke-width="2"/>
<line x1="1558" y1="348.5" x2="1567" y2="348.5" stroke="#000" stroke-width="2"/>
<line x1="741" y1="377.1" x2="750" y2="377.1" stroke="#000" stroke-width="2"/>
<line x1="1558" y1="377.1" x2="1567" y2="377.1" stroke="#000" stroke-width="2"/>
<line x1="741" y1="405.6" x2="750" y2="405.6" stroke="#000" stroke-width="2"/>
<line x1="1558" y1="405.6" x2="1567" y2="405.6" stroke="#000" stroke-width="2"/>
<line x1="741" y1="434.1" x2="750" y2="434.1" stroke="#000" stroke-width="2"/>
<line x1="1558" y1="434.1" x2="1567" y2="434.1" stroke="#000" stroke-width="2"/>
<line x1="741" y1="462.6" x2="750" y2="462.6" stroke="#000" stroke-width="2"/>
<line x1="1558" y1="462.6" x2="1567" y2="462.6" stroke="#000" stroke-width="2"/>
<line x1="741" y1="491.1" x2="750" y2="491.1" stroke="#000" stroke-width="2"/>
<line x1="1558" y1="491.1" x2="1567" y2="491.1" stroke="#000" stroke-width="2"/>
<line x1="741" y1="519.7" x2="750" y2="519.7" stroke="#000" stroke-width="2"/>
<line x1="1558" y1="519.7" x2="1567" y2="519.7" stroke="#000" stroke-width="2"/>
<line x1="741" y1="548.2" x2="750" y2="548.2" stroke="#000" stroke-width="2"/>
<line x1="1558" y1="548.2" x2="1567" y2="548.2" stroke="#000" stroke-width="2"/>
<line x1="741" y1="576.7" x2="750" y2="576.7" stroke="#000" stroke-width="2"/>
<line x1="1558" y1="576.7" x2="1567" y2="576.7" stroke="#000" stroke-width="2"/>
<line x1="741" y1="605.2" x2="750" y2="605.2" stroke="#000" stroke-width="2"/>
<line x1="1558" y1="605.2" x2="1567" y2="605.2" stroke="#000" stroke-width="2"/>
<line x1="741" y1="633.7" x2="750" y2="633.7" stroke="#000" stroke-width="2"/>
<line x1="1558" y1="633.7" x2="1567" y2="633.7" stroke="#000" stroke-width="2"/>
<line x1="741" y1="662.3" x2="750" y2="662.3" stroke="#000" stroke-width="2"/>
<line x1="1558" y1="662.3" x2="1567" y2="662.3" stroke="#000" stroke-width="2"/>
<line x1="741" y1="690.8" x2="750" y2="690.8" stroke="#000" stroke-width="2"/>
<line x1="1558" y1="690.8" x2="1567" y2="690.8" stroke="#000" stroke-width="2"/>
<line x1="741" y1="719.3" x2="750" y2="719.3" stroke="#000" stroke-width="2"/>
<line x1="1558" y1="719.3" x2="1567" y2="719.3" stroke="#000" stroke-width="2"/>
<line x1="741" y1="747.8" x2="750" y2="747.8" stroke="#000" stroke-width="2"/>
<line x1="1558" y1="747.8" x2="1567" y2="747.8" stroke="#000" stroke-width="2"/>
<path d="M1021.8 378.5 V390.5 M1015.8 384.5 H1027.8" stroke="#000" stroke-width="1.5"/>
</svg>
<div class="t" style="left:688.66px;top:281.02px;font-size:19px;line-height:19px;color:#000;">-0.04</div>
<div class="t" style="left:689.66px;top:309.54px;font-size:19px;line-height:19px;color:#000;">-0.05</div>
<div class="t" style="left:689.66px;top:338.06px;font-size:19px;line-height:19px;color:#000;">-0.06</div>
<div class="t" style="left:689.66px;top:366.58px;font-size:19px;line-height:19px;color:#000;">-0.07</div>
<div class="t" style="left:689.66px;top:395.10px;font-size:19px;line-height:19px;color:#000;">-0.08</div>
<div class="t" style="left:689.66px;top:423.62px;font-size:19px;line-height:19px;color:#000;">-0.09</div>
<div class="t" style="left:700.23px;top:452.14px;font-size:19px;line-height:19px;color:#000;">-0.1</div>
<div class="t" style="left:691.07px;top:480.66px;font-size:19px;line-height:19px;color:#000;">-0.11</div>
<div class="t" style="left:689.66px;top:509.18px;font-size:19px;line-height:19px;color:#000;">-0.12</div>
<div class="t" style="left:689.66px;top:537.70px;font-size:19px;line-height:19px;color:#000;">-0.13</div>
<div class="t" style="left:688.66px;top:566.22px;font-size:19px;line-height:19px;color:#000;">-0.14</div>
<div class="t" style="left:689.66px;top:594.74px;font-size:19px;line-height:19px;color:#000;">-0.15</div>
<div class="t" style="left:689.66px;top:623.26px;font-size:19px;line-height:19px;color:#000;">-0.16</div>
<div class="t" style="left:689.66px;top:651.78px;font-size:19px;line-height:19px;color:#000;">-0.17</div>
<div class="t" style="left:689.66px;top:680.30px;font-size:19px;line-height:19px;color:#000;">-0.18</div>
<div class="t" style="left:689.66px;top:708.82px;font-size:19px;line-height:19px;color:#000;">-0.19</div>
<div class="t" style="left:700.23px;top:737.34px;font-size:19px;line-height:19px;color:#000;">-0.2</div>
<div class="t" style="left:755.14px;top:766.72px;font-size:19px;line-height:19px;color:#000;">-3</div>
<div class="t" style="left:885.34px;top:766.72px;font-size:19px;line-height:19px;color:#000;">-2</div>
<div class="t" style="left:1015.54px;top:766.72px;font-size:19px;line-height:19px;color:#000;">-1</div>
<div class="t" style="left:1145.74px;top:766.72px;font-size:19px;line-height:19px;color:#000;">-0</div>
<div class="t" style="left:1278.60px;top:766.72px;font-size:19px;line-height:19px;color:#000;">1</div>
<div class="t" style="left:1409.30px;top:766.72px;font-size:19px;line-height:19px;color:#000;">2</div>
<div class="t" style="left:1539.50px;top:766.72px;font-size:19px;line-height:19px;color:#000;">3</div>
<div class="t" style="left:1106.00px;top:792.76px;font-size:18px;line-height:18px;color:#000;letter-spacing:0.799px;">k[1/nm] (x)</div>
<div style="position:absolute;left:1597px;top:266px;width:255px;height:580px;border:1px solid #dcdcdc;box-sizing:border-box"></div>
<div style="position:absolute;left:1606px;top:264px;width:70px;height:4px;background:#f0f0f0"></div>
<div class="t" style="left:1610.00px;top:254.76px;font-size:18px;line-height:18px;color:#000;letter-spacing:-0.003px;">Overlay</div>
<div style="position:absolute;left:1599px;top:280px;width:250px;height:524px;border:1px solid #828790;box-sizing:border-box;background:#fff"></div>
<div style="position:absolute;left:1632px;top:283px;width:214px;height:29px;background:#f0f0f0"></div>
<div style="position:absolute;left:1608px;top:288px;width:20px;height:20px;border:2px solid #333;box-sizing:border-box;background:#fff"></div>
<svg style="position:absolute;left:1608px;top:288px" width="20" height="20" viewBox="0 0 20 20"><path d="M3.5 10 L7.8 14.5 L16.5 5" fill="none" stroke="#333" stroke-width="2"/></svg>
<div class="t" style="left:1636.00px;top:290.16px;font-size:18px;line-height:18px;color:#000;letter-spacing:0.187px;">ev_4[eV] - C:\D\nextnano</div>
<div style="position:absolute;left:1600px;top:777px;width:248px;height:24px;background:#f0f0f0"></div>
<div style="position:absolute;left:1628px;top:777px;width:40px;height:24px;background:#cdcdcd"></div>
<svg style="position:absolute;left:1605px;top:780px" width="240" height="18" viewBox="0 0 240 18"><path d="M9 3 L3 9 L9 15 M226 3 L232 9 L226 15" fill="none" stroke="#555" stroke-width="1.8"/></svg>
<div style="position:absolute;left:1599px;top:819px;width:20px;height:20px;border:2px solid #333;box-sizing:border-box;background:#fff"></div>
<svg style="position:absolute;left:1599px;top:819px" width="20" height="20" viewBox="0 0 20 20"><path d="M3.5 10 L7.8 14.5 L16.5 5" fill="none" stroke="#333" stroke-width="2"/></svg>
<div class="t" style="left:1629.00px;top:820.26px;font-size:18px;line-height:18px;color:#000;letter-spacing:-0.041px;">Check all</div>
<div class="t" style="left:396.70px;top:866.76px;font-size:18px;line-height:18px;color:#000;letter-spacing:0.328px;">Simulations in</div>
<div style="position:absolute;left:531px;top:859px;width:301px;height:36px;border:1.5px solid #7a7a7a;box-sizing:border-box;background:#fff"></div>
<div class="t" style="left:536.00px;top:866.76px;font-size:18px;line-height:18px;color:#000;letter-spacing:0.626px;">C:\D\nextnano output</div>
<svg style="position:absolute;left:806px;top:870px" width="16" height="12" viewBox="0 0 16 12"><path d="M2 3 L8 9 L14 3" fill="none" stroke="#333" stroke-width="1.4"/></svg>
<svg style="position:absolute;left:849px;top:862px" width="36" height="32" viewBox="0 0 36 32">
<defs><linearGradient id="gf" x1="0" y1="0" x2="1" y2="0"><stop offset="0" stop-color="#1a7ae8"/><stop offset="1" stop-color="#18d8ee"/></linearGradient></defs>
<path d="M2.5 27 V6 Q2.5 4 4.5 4 H12 L15 7 H26 Q28 7 28 9 V12" fill="none" stroke="#1a8ae8" stroke-width="2.4"/>
<path d="M2.5 27.5 L8 13 H33.5 L28 27.5 Z" fill="none" stroke="url(#gf)" stroke-width="2.4" stroke-linejoin="round"/>
</svg>
<svg style="position:absolute;left:891px;top:860px" width="34" height="33" viewBox="0 0 34 33">
<path d="M2 16 L16.5 2.5 L31 16 M6 13 V31 H27 V13 M13 31 V21 H20 V31 M24 9 V4 H27 V12" fill="none" stroke="#b8b8b8" stroke-width="2.4" stroke-linejoin="round"/>
</svg>
<div style="position:absolute;left:397px;top:903px;width:20px;height:20px;border:2px solid #333;box-sizing:border-box;background:#fff"></div>
<div class="t" style="left:426.80px;top:903.06px;font-size:18px;line-height:18px;color:#000;letter-spacing:0.096px;">Order folders by date</div>
<div style="position:absolute;left:385px;top:934px;width:542px;height:173px;border:1px solid #828790;box-sizing:border-box;background:#fff"></div>
<svg style="position:absolute;left:0;top:0;overflow:visible" width="1" height="1"><defs>
<linearGradient id="fyel" x1="0" y1="0" x2="0" y2="1"><stop offset="0" stop-color="#fff6c0"/><stop offset="0.5" stop-color="#ffe98a"/><stop offset="1" stop-color="#e8b840"/></linearGradient>
<radialGradient id="fpic" cx="0.5" cy="0.5" r="0.6"><stop offset="0" stop-color="#ff1010"/><stop offset="0.3" stop-color="#e0c000"/><stop offset="0.55" stop-color="#10a040"/><stop offset="1" stop-color="#1030c0"/></radialGradient>
</defs></svg>
<svg style="position:absolute;left:391px;top:938.8px" width="26" height="24" viewBox="0 0 26 24">
<path d="M1.5 6 Q1.5 2 4.5 2 H9.5 Q11.5 2 12.5 4.5 H20.5 Q23.5 4.5 23.5 7.5 V9" fill="#fff4b8" stroke="#c8901a" stroke-width="1.5"/>
<rect x="1.5" y="7.5" width="23" height="14.5" rx="2.5" fill="url(#fyel)" stroke="#c8901a" stroke-width="1.6"/><rect x="7.5" y="8.5" width="11.5" height="11" fill="url(#fpic)" stroke="#0a1a90" stroke-width="0.8"/><path d="M24.8 9 V21.5 Q24.8 23.3 22.5 23.3 H3" fill="none" stroke="#8a6010" stroke-width="0.9" opacity="0.6"/></svg>
<div class="t" style="left:424.00px;top:941.56px;font-size:18px;line-height:18px;color:#000;letter-spacing:-0.679px;">2DGaN_nanowire_27s_nn3_2023_04_19-17_33_04</div>
<svg style="position:absolute;left:391px;top:966.6999999999999px" width="26" height="24" viewBox="0 0 26 24">
<path d="M1.5 6 Q1.5 2 4.5 2 H9.5 Q11.5 2 12.5 4.5 H20.5 Q23.5 4.5 23.5 7.5 V9" fill="#fff4b8" stroke="#c8901a" stroke-width="1.5"/>
<rect x="1.5" y="7.5" width="23" height="14.5" rx="2.5" fill="url(#fyel)" stroke="#c8901a" stroke-width="1.6"/><rect x="7.5" y="8.5" width="11.5" height="11" fill="url(#fpic)" stroke="#0a1a90" stroke-width="0.8"/><path d="M24.8 9 V21.5 Q24.8 23.3 22.5 23.3 H3" fill="none" stroke="#8a6010" stroke-width="0.9" opacity="0.6"/></svg>
<div class="t" style="left:424.00px;top:969.46px;font-size:18px;line-height:18px;color:#000;letter-spacing:-0.679px;">2DGaN_nanowire_27s_nn3_2023_04_20-16_22_20</div>
<svg style="position:absolute;left:391px;top:994.5999999999999px" width="26" height="24" viewBox="0 0 26 24">
<path d="M1.5 6 Q1.5 2 4.5 2 H9.5 Q11.5 2 12.5 4.5 H20.5 Q23.5 4.5 23.5 7.5 V9" fill="#fff4b8" stroke="#c8901a" stroke-width="1.5"/>
<rect x="1.5" y="7.5" width="23" height="14.5" rx="2.5" fill="url(#fyel)" stroke="#c8901a" stroke-width="1.6"/><rect x="7.5" y="8.5" width="11.5" height="11" fill="url(#fpic)" stroke="#0a1a90" stroke-width="0.8"/><path d="M24.8 9 V21.5 Q24.8 23.3 22.5 23.3 H3" fill="none" stroke="#8a6010" stroke-width="0.9" opacity="0.6"/></svg>
<div class="t" style="left:424.00px;top:997.36px;font-size:18px;line-height:18px;color:#000;letter-spacing:-0.191px;">2DGaN_nanowire_electrons_nn3</div>
<svg style="position:absolute;left:391px;top:1022.5px" width="26" height="24" viewBox="0 0 26 24">
<path d="M1.5 6 Q1.5 2 4.5 2 H9.5 Q11.5 2 12.5 4.5 H20.5 Q23.5 4.5 23.5 7.5 V9" fill="#fff4b8" stroke="#c8901a" stroke-width="1.5"/>
<rect x="1.5" y="7.5" width="23" height="14.5" rx="2.5" fill="url(#fyel)" stroke="#c8901a" stroke-width="1.6"/><path d="M3 18.5 H23" stroke="#f0b040" stroke-width="1.4"/><path d="M24.8 9 V21.5 Q24.8 23.3 22.5 23.3 H3" fill="none" stroke="#8a6010" stroke-width="0.9" opacity="0.6"/></svg>
<div class="t" style="left:424.00px;top:1025.26px;font-size:18px;line-height:18px;color:#000;letter-spacing:-0.132px;">2DGaN_nanowire_electrons_nnp</div>
<div style="position:absolute;left:421px;top:1048px;width:293px;height:27px;background:#f0f0f0"></div>
<svg style="position:absolute;left:391px;top:1050.3999999999999px" width="26" height="24" viewBox="0 0 26 24">
<path d="M1.5 6 Q1.5 2 4.5 2 H9.5 Q11.5 2 12.5 4.5 H20.5 Q23.5 4.5 23.5 7.5 V9" fill="#fff4b8" stroke="#c8901a" stroke-width="1.5"/>
<rect x="1.5" y="7.5" width="23" height="14.5" rx="2.5" fill="url(#fyel)" stroke="#c8901a" stroke-width="1.6"/><rect x="7.5" y="8.5" width="11.5" height="11" fill="url(#fpic)" stroke="#0a1a90" stroke-width="0.8"/><path d="M24.8 9 V21.5 Q24.8 23.3 22.5 23.3 H3" fill="none" stroke="#8a6010" stroke-width="0.9" opacity="0.6"/></svg>
<div class="t" style="left:424.00px;top:1053.16px;font-size:18px;line-height:18px;color:#000;letter-spacing:-0.293px;">2DGaN_nanowire_holes_6x6kp_nn3</div>
<div style="position:absolute;left:899px;top:936px;width:26.5px;height:170px;background:#f0f0f0"></div>
<div style="position:absolute;left:900px;top:997px;width:22px;height:26px;background:#cdcdcd"></div>
<svg style="position:absolute;left:902px;top:942px" width="18" height="130" viewBox="0 0 18 130"><path d="M4.5 11.5 L9.5 6.5 L14.5 11.5 M4.5 121 L9.5 126 L14.5 121" fill="none" stroke="#555" stroke-width="2.4"/></svg>
<div style="position:absolute;left:386px;top:1080px;width:539px;height:25.5px;background:#f0f0f0"></div>
<div style="position:absolute;left:413px;top:1080px;width:140px;height:23px;background:#cdcdcd"></div>
<svg style="position:absolute;left:392px;top:1083px" width="510" height="18" viewBox="0 0 510 18"><path d="M11.5 4 L6.5 9 L11.5 14 M489 4 L494 9 L489 14" fill="none" stroke="#555" stroke-width="2.4"/></svg>
<div class="t" style="left:945.90px;top:867.16px;font-size:18px;line-height:18px;color:#000;letter-spacing:0.473px;">Output files of simulation</div>
<div class="t" style="left:1179.00px;top:867.16px;font-size:18px;line-height:18px;color:#000;letter-spacing:0.068px;">(finished on 23/09/2019)  60 MB</div>
<svg style="position:absolute;left:1467px;top:862.3px" width="22" height="22" viewBox="0 0 22 22"><circle cx="11" cy="11" r="9.7" fill="#fff" stroke="#333" stroke-width="1.5"/></svg>
<div class="t" style="left:1498.70px;top:865.06px;font-size:18px;line-height:18px;color:#000;letter-spacing:-0.569px;">Tree view</div>
<svg style="position:absolute;left:1467px;top:902px" width="22" height="22" viewBox="0 0 22 22"><circle cx="11" cy="11" r="9.7" fill="#fff" stroke="#333" stroke-width="1.5"/><circle cx="11" cy="11" r="5" fill="#333"/></svg>
<div class="t" style="left:1497.70px;top:904.26px;font-size:18px;line-height:18px;color:#000;letter-spacing:-0.090px;">List view</div>
<div class="t" style="left:946.00px;top:904.26px;font-size:18px;line-height:18px;color:#0000ee;letter-spacing:-0.296px;text-decoration:underline">2DGaN_nanowire_holes_6x6kp_nn3</div>
<div style="position:absolute;left:935px;top:934px;width:652px;height:173px;border:1px solid #828790;box-sizing:border-box;background:#fff"></div>
<svg style="position:absolute;left:0;top:0" width="1877" height="1125">
<line x1="955.5" y1="936" x2="955.5" y2="1106" stroke="#444" stroke-width="1.2" stroke-dasharray="1.3 2.2"/>
<line x1="986.5" y1="936" x2="986.5" y2="1033" stroke="#444" stroke-width="1.2" stroke-dasharray="1.3 2.2"/>
<line x1="987" y1="951.6" x2="1000" y2="951.6" stroke="#444" stroke-width="1.2" stroke-dasharray="1.3 2.2"/>
<line x1="987" y1="979.4" x2="1000" y2="979.4" stroke="#444" stroke-width="1.2" stroke-dasharray="1.3 2.2"/>
<line x1="987" y1="1007.1" x2="1000" y2="1007.1" stroke="#444" stroke-width="1.2" stroke-dasharray="1.3 2.2"/>
<line x1="987" y1="1034.9" x2="1000" y2="1034.9" stroke="#444" stroke-width="1.2" stroke-dasharray="1.3 2.2"/>
<line x1="956" y1="1063.3" x2="972" y2="1063.3" stroke="#444" stroke-width="1.2" stroke-dasharray="1.3 2.2"/>
<line x1="956" y1="1091.0" x2="972" y2="1091.0" stroke="#444" stroke-width="1.2" stroke-dasharray="1.3 2.2"/>
</svg>
<svg style="position:absolute;left:1001.5px;top:939.5px" width="25" height="24" viewBox="0 0 25 24">
<rect x="1" y="1" width="23" height="22" fill="#d4f2d4" stroke="#000" stroke-width="2"/>
<rect x="1" y="1" width="23" height="22" fill="none" stroke="#fff" stroke-width="0.9" stroke-dasharray="1.2 2.2"/>
<path d="M3 15 H8.5 Q10 15 11 10 Q12 5 13.5 5 Q15 5 16 10 Q17 15 18.5 15 H22" fill="none" stroke="#ee1010" stroke-width="1.8"/>
<path d="M3 10.5 H9.5 Q11 10.5 12.5 14 Q14 17.5 16 17.5 H22" fill="none" stroke="#1020ee" stroke-width="1.8"/>
</svg>
<div class="t" style="left:1033.00px;top:941.96px;font-size:18px;line-height:18px;color:#000;letter-spacing:-0.399px;">kpar2D_density_1_0_1_hl_6x6kp_ev_min001_ev_max034.dat</div>
<svg style="position:absolute;left:1001.5px;top:967.25px" width="25" height="24" viewBox="0 0 25 24">
<rect x="1" y="1" width="23" height="22" fill="#d4f2d4" stroke="#000" stroke-width="2"/>
<rect x="1" y="1" width="23" height="22" fill="none" stroke="#fff" stroke-width="0.9" stroke-dasharray="1.2 2.2"/>
<path d="M3 15 H8.5 Q10 15 11 10 Q12 5 13.5 5 Q15 5 16 10 Q17 15 18.5 15 H22" fill="none" stroke="#ee1010" stroke-width="1.8"/>
<path d="M3 10.5 H9.5 Q11 10.5 12.5 14 Q14 17.5 16 17.5 H22" fill="none" stroke="#1020ee" stroke-width="1.8"/>
</svg>
<div class="t" style="left:1033.00px;top:969.71px;font-size:18px;line-height:18px;color:#000;letter-spacing:-0.340px;">kpar2D_density_sum_1_0_1_hl_6x6kp.dat</div>
<div style="position:absolute;left:1031px;top:992px;width:441px;height:27px;background:#f0f0f0"></div>
<svg style="position:absolute;left:1001.5px;top:995.0px" width="25" height="24" viewBox="0 0 25 24">
<rect x="1" y="1" width="23" height="22" fill="#d4f2d4" stroke="#000" stroke-width="2"/>
<rect x="1" y="1" width="23" height="22" fill="none" stroke="#fff" stroke-width="0.9" stroke-dasharray="1.2 2.2"/>
<path d="M3 15 H8.5 Q10 15 11 10 Q12 5 13.5 5 Q15 5 16 10 Q17 15 18.5 15 H22" fill="none" stroke="#ee1010" stroke-width="1.8"/>
<path d="M3 10.5 H9.5 Q11 10.5 12.5 14 Q14 17.5 16 17.5 H22" fill="none" stroke="#1020ee" stroke-width="1.8"/>
</svg>
<div class="t" style="left:1033.00px;top:997.46px;font-size:18px;line-height:18px;color:#000;letter-spacing:-0.392px;">kpar2D_disp_0_1_hl_6x6kp_ev_min001_ev_max034.dat</div>
<svg style="position:absolute;left:1001.5px;top:1022.75px" width="25" height="24" viewBox="0 0 25 24">
<rect x="1" y="1" width="23" height="22" fill="#d4f2d4" stroke="#000" stroke-width="2"/>
<rect x="1" y="1" width="23" height="22" fill="none" stroke="#fff" stroke-width="0.9" stroke-dasharray="1.2 2.2"/>
<path d="M3 15 H8.5 Q10 15 11 10 Q12 5 13.5 5 Q15 5 16 10 Q17 15 18.5 15 H22" fill="none" stroke="#ee1010" stroke-width="1.8"/>
<path d="M3 10.5 H9.5 Q11 10.5 12.5 14 Q14 17.5 16 17.5 H22" fill="none" stroke="#1020ee" stroke-width="1.8"/>
</svg>
<div class="t" style="left:1033.00px;top:1025.21px;font-size:18px;line-height:18px;color:#000;letter-spacing:-0.433px;">mass_kpar2D_disp_0_1_hl_6x6kp_ev_min001_ev_max034.dat</div>
<svg style="position:absolute;left:973px;top:1049.0px" width="24" height="26" viewBox="0 0 24 26"><path d="M3.5 1 H15 L22 8 V24.5 H3.5 Z" fill="#fff" stroke="#c0c0c0" stroke-width="1.2"/><path d="M15 1 V8 H22" fill="none" stroke="#c0c0c0" stroke-width="1"/><path d="M2 7 V17 M5.5 17 V11 Q5.5 9 8 9 Q10.5 9 10.5 11 V17" fill="none" stroke="#20b0c0" stroke-width="1.6"/><path d="M12.5 8 Q14.5 12 12.5 17" fill="none" stroke="#a0a0a0" stroke-width="1"/><path d="M15 12 H20 M15 15 H20 M6 21 H20" stroke="#b0b0b0" stroke-width="1"/></svg>
<div class="t" style="left:1004.00px;top:1052.96px;font-size:18px;line-height:18px;color:#000;letter-spacing:-0.197px;">2DGaN_nanowire_holes_6x6kp_nn3.in</div>
<svg style="position:absolute;left:973px;top:1074.8px" width="24" height="28" viewBox="0 0 24 28"><path d="M5 4 H19 V25 H5 Z" fill="#f4f4ff" stroke="#6070a0" stroke-width="1.4"/><path d="M8 10 H16 M8 14 H16 M8 18 H13" stroke="#555" stroke-width="1.2"/><path d="M6 3 H18" stroke="#b09040" stroke-width="2"/></svg>
<div class="t" style="left:1004.00px;top:1080.71px;font-size:18px;line-height:18px;color:#000;letter-spacing:-0.167px;">2DGaN_nanowire_holes_6x6kp_nn3.log</div>
<div style="position:absolute;left:1557px;top:936px;width:28px;height:169px;background:#f0f0f0"></div>
<div style="position:absolute;left:1559px;top:1051px;width:23px;height:26px;background:#cdcdcd"></div>
<svg style="position:absolute;left:1561px;top:942px" width="18" height="160" viewBox="0 0 18 160"><path d="M4 11.5 L9 6.5 L14 11.5 M4 146 L9 151 L14 146" fill="none" stroke="#555" stroke-width="2.4"/></svg>
<div style="position:absolute;left:1594px;top:856px;width:140px;height:36px;border:1.5px solid #999;box-sizing:border-box;background:#f0f0f0"></div>
<div class="t" style="left:1632.00px;top:866.76px;font-size:18px;line-height:18px;color:#000;letter-spacing:-0.480px;">Check</div>
<div style="position:absolute;left:1741px;top:856px;width:110px;height:36px;border:1.5px solid #999;box-sizing:border-box;background:#f0f0f0"></div>
<div class="t" style="left:1753.60px;top:866.76px;font-size:18px;line-height:18px;color:#000;letter-spacing:-0.525px;">Select</div>
<div style="position:absolute;left:1594px;top:895px;width:140px;height:36px;border:1.5px solid #999;box-sizing:border-box;background:#f0f0f0"></div>
<div class="t" style="left:1631.00px;top:905.76px;font-size:18px;line-height:18px;color:#000;letter-spacing:0.061px;">Uncheck</div>
<div style="position:absolute;left:1741px;top:895px;width:110px;height:36px;border:1.5px solid #999;box-sizing:border-box;background:#f0f0f0"></div>
<div class="t" style="left:1752.60px;top:905.76px;font-size:18px;line-height:18px;color:#000;letter-spacing:-0.276px;">Deselect</div>
<svg style="position:absolute;left:1601px;top:864px" width="26" height="22" viewBox="0 0 26 22"><path d="M2 6 L9 17 Q15 6 24 2" fill="none" stroke="#18b8f0" stroke-width="3.2" stroke-linecap="round"/></svg>
<svg style="position:absolute;left:1601px;top:902px" width="26" height="24" viewBox="0 0 26 24"><path d="M24 3 Q12 8 5 21 M3 4 Q14 9 22 21" fill="none" stroke="#1a80e8" stroke-width="3.2" stroke-linecap="round"/></svg>
<div style="position:absolute;left:1594px;top:934px;width:262px;height:174px;border:1px solid #828790;box-sizing:border-box;background:#fff"></div>
<div style="position:absolute;left:1595px;top:935px;width:234px;height:171px;overflow:hidden">
<div style="position:absolute;left:8px;top:5.7999999999999545px;width:20px;height:20px;border:2px solid #333;box-sizing:border-box;background:#fff"></div>
<svg style="position:absolute;left:8px;top:5.7999999999999545px" width="20" height="20" viewBox="0 0 20 20"><path d="M3.5 10 L7.8 14.5 L16.5 5" fill="none" stroke="#333" stroke-width="2"/></svg>
<div class="t" style="left:36.40px;top:6.56px;font-size:18px;line-height:18px;color:#ff0000;letter-spacing:-0.450px;">ev_1[eV]</div>
<div style="position:absolute;left:8px;top:35.049999999999955px;width:20px;height:20px;border:2px solid #333;box-sizing:border-box;background:#fff"></div>
<div class="t" style="left:36.40px;top:35.81px;font-size:18px;line-height:18px;color:#0000ff;letter-spacing:-0.450px;">ev_2[eV]</div>
<div style="position:absolute;left:8px;top:64.29999999999995px;width:20px;height:20px;border:2px solid #333;box-sizing:border-box;background:#fff"></div>
<div class="t" style="left:36.40px;top:65.06px;font-size:18px;line-height:18px;color:#008000;letter-spacing:-0.450px;">ev_3[eV]</div>
<div style="position:absolute;left:8px;top:93.54999999999995px;width:20px;height:20px;border:2px solid #333;box-sizing:border-box;background:#fff"></div>
<div class="t" style="left:36.40px;top:94.31px;font-size:18px;line-height:18px;color:#8b4513;letter-spacing:-0.450px;">ev_4[eV]</div>
<div style="position:absolute;left:8px;top:122.79999999999995px;width:20px;height:20px;border:2px solid #333;box-sizing:border-box;background:#fff"></div>
<svg style="position:absolute;left:8px;top:122.79999999999995px" width="20" height="20" viewBox="0 0 20 20"><path d="M3.5 10 L7.8 14.5 L16.5 5" fill="none" stroke="#333" stroke-width="2"/></svg>
<div class="t" style="left:36.40px;top:123.56px;font-size:18px;line-height:18px;color:#ff8000;letter-spacing:-0.450px;">ev_5[eV]</div>
<div style="position:absolute;left:33px;top:119px;width:81px;height:30px;border:1px dotted #000;box-sizing:border-box"></div>
<div style="position:absolute;left:8px;top:152.04999999999995px;width:20px;height:20px;border:2px solid #333;box-sizing:border-box;background:#fff"></div>
<div class="t" style="left:36.40px;top:152.81px;font-size:18px;line-height:18px;color:#ff00ff;letter-spacing:-0.450px;">ev_6[eV]</div>
</div>
<div style="position:absolute;left:1829px;top:936px;width:25px;height:170px;background:#f0f0f0"></div>
<div style="position:absolute;left:1830px;top:963px;width:22px;height:25px;background:#cdcdcd"></div>
<svg style="position:absolute;left:1832px;top:942px" width="18" height="160" viewBox="0 0 18 160"><path d="M4 11.5 L9 6.5 L14 11.5 M4 146 L9 151 L14 146" fill="none" stroke="#555" stroke-width="2.4"/></svg>
<div class="t" style="left:171.30px;top:116.98px;font-size:22px;line-height:22px;color:#000;letter-spacing:0.691px;-webkit-text-stroke:0">Active output tab</div>
<div style="position:absolute;left:167.7px;top:146.8px;width:212.8px;height:3px;background:#000"></div>
<svg style="position:absolute;left:373.5px;top:141.3px" width="14" height="14" viewBox="0 0 14 14"><path d="M7 0 L14 7 L7 14 L0 7 Z" fill="#000"/></svg>
<div class="t" style="left:43.70px;top:196.08px;font-size:22px;line-height:22px;color:#000;letter-spacing:0.326px;-webkit-text-stroke:0">Path and date of displayed file</div>
<div style="position:absolute;left:47.3px;top:229.0px;width:338.09999999999997px;height:3px;background:#000"></div>
<svg style="position:absolute;left:378.4px;top:223.5px" width="14" height="14" viewBox="0 0 14 14"><path d="M7 0 L14 7 L7 14 L0 7 Z" fill="#000"/></svg>
<div class="t" style="left:200.20px;top:251.38px;font-size:22px;line-height:22px;color:#000;letter-spacing:-0.016px;-webkit-text-stroke:0">Displayed area</div>
<div style="position:absolute;left:202.2px;top:284.7px;width:183.2px;height:3px;background:#000"></div>
<svg style="position:absolute;left:378.4px;top:279.2px" width="14" height="14" viewBox="0 0 14 14"><path d="M7 0 L14 7 L7 14 L0 7 Z" fill="#000"/></svg>
<div class="t" style="left:31.70px;top:449.08px;font-size:22px;line-height:22px;color:#000;letter-spacing:0.502px;-webkit-text-stroke:0">Additional visualization options</div>
<div style="position:absolute;left:29.1px;top:484.0px;width:355.4px;height:3px;background:#000"></div>
<svg style="position:absolute;left:377.5px;top:478.5px" width="14" height="14" viewBox="0 0 14 14"><path d="M7 0 L14 7 L7 14 L0 7 Z" fill="#000"/></svg>
<div style="position:absolute;left:364px;top:477px;width:2.5px;height:75px;background:#000"></div>
<div class="t" style="left:234.60px;top:573.18px;font-size:22px;line-height:22px;color:#000;letter-spacing:0.144px;-webkit-text-stroke:0">Graph style</div>
<div style="position:absolute;left:227.5px;top:606.5px;width:154.0px;height:3px;background:#000"></div>
<svg style="position:absolute;left:374.5px;top:601px" width="14" height="14" viewBox="0 0 14 14"><path d="M7 0 L14 7 L7 14 L0 7 Z" fill="#000"/></svg>
<div class="t" style="left:262.90px;top:675.38px;font-size:22px;line-height:22px;color:#000;letter-spacing:0.332px;-webkit-text-stroke:0">Diagram</div>
<div style="position:absolute;left:260.6px;top:706.7px;width:406.4px;height:3px;background:#000"></div>
<svg style="position:absolute;left:660px;top:701.2px" width="14" height="14" viewBox="0 0 14 14"><path d="M7 0 L14 7 L7 14 L0 7 Z" fill="#000"/></svg>
<div class="t" style="left:159.20px;top:730.98px;font-size:22px;line-height:22px;color:#000;letter-spacing:0.188px;-webkit-text-stroke:0">List of overlay data</div>
<div style="position:absolute;left:156.4px;top:763.9px;width:1464.6px;height:3px;background:#000"></div>
<svg style="position:absolute;left:1614px;top:758.4px" width="14" height="14" viewBox="0 0 14 14"><path d="M7 0 L14 7 L7 14 L0 7 Z" fill="#000"/></svg>
<div class="t" style="left:158.30px;top:898.68px;font-size:22px;line-height:22px;color:#000;letter-spacing:0.757px;-webkit-text-stroke:0">Output folder view</div>
<div style="position:absolute;left:156.3px;top:932.6px;width:260.09999999999997px;height:3px;background:#000"></div>
<svg style="position:absolute;left:409.4px;top:927.1px" width="14" height="14" viewBox="0 0 14 14"><path d="M7 0 L14 7 L7 14 L0 7 Z" fill="#000"/></svg>
<div class="t" style="left:67.60px;top:955.98px;font-size:22px;line-height:22px;color:#000;letter-spacing:0.581px;-webkit-text-stroke:0">Simulation folder view</div>
<div class="t" style="left:67.60px;top:985.78px;font-size:22px;line-height:22px;color:#000;letter-spacing:0.532px;-webkit-text-stroke:0">(Content of selected folder)</div>
<div style="position:absolute;left:62.1px;top:1016.6px;width:890.9px;height:3px;background:#000"></div>
<svg style="position:absolute;left:946px;top:1011.1px" width="14" height="14" viewBox="0 0 14 14"><path d="M7 0 L14 7 L7 14 L0 7 Z" fill="#000"/></svg>
<div class="t" style="left:95.20px;top:1032.88px;font-size:22px;line-height:22px;color:#000;letter-spacing:0.446px;-webkit-text-stroke:0">Column view</div>
<div class="t" style="left:95.20px;top:1062.68px;font-size:22px;line-height:22px;color:#000;letter-spacing:0.487px;-webkit-text-stroke:0">(Content of selected file)</div>
<div style="position:absolute;left:80.4px;top:1091.7px;width:1661.6px;height:3px;background:#000"></div>
<svg style="position:absolute;left:1735px;top:1086.2px" width="14" height="14" viewBox="0 0 14 14"><path d="M7 0 L14 7 L7 14 L0 7 Z" fill="#000"/></svg>
</body></html>
